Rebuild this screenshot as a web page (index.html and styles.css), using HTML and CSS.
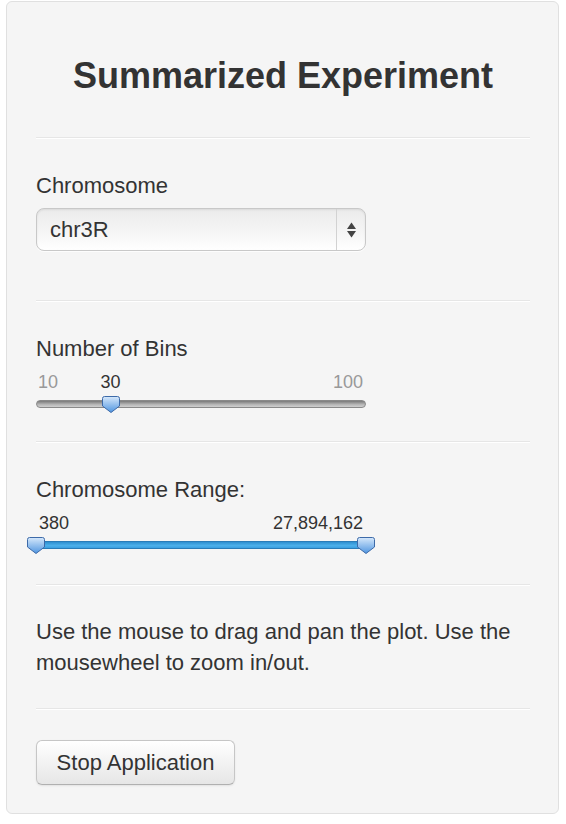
FILE: index.html
```html
<!DOCTYPE html>
<html>
<head>
<meta charset="utf-8">
<link rel="stylesheet" href="styles.css">
</head>
<body>
<div class="panel">
  <h1 class="title">Summarized Experiment</h1>
  <hr class="sep">
  <div class="field">
    <label class="label">Chromosome</label>
    <div class="select">
      <span class="select-value">chr3R</span>
      <span class="select-arrows">
        <svg width="11" height="18" viewBox="0 0 11 18"><path d="M5.5 1.5 L10 8 H1 Z" fill="#444"/><path d="M5.5 16.5 L10 10 H1 Z" fill="#444"/></svg>
      </span>
    </div>
  </div>
  <hr class="sep sep-select">
  <div class="field">
    <label class="label">Number of Bins</label>
    <div class="slider slider-bins">
      <span class="s-lbl s-min">10</span>
      <span class="s-lbl s-val" style="left:22.6%">30</span>
      <span class="s-lbl s-max">100</span>
      <div class="track track-gray"></div>
      <svg class="handle" style="left:22.6%" width="20" height="19" viewBox="0 0 20 19"><defs><linearGradient id="hg1" x1="0" y1="0" x2="0" y2="1"><stop offset="0" stop-color="#d6e8fb"/><stop offset="1" stop-color="#4f95e0"/></linearGradient></defs><path d="M1.5 3.5 Q1.5 1.5 3.5 1.5 H16.5 Q18.5 1.5 18.5 3.5 V11 L10 17.5 L1.5 11 Z" fill="url(#hg1)" stroke="#3d6aa8" stroke-width="1"/></svg>
    </div>
  </div>
  <hr class="sep sep-slider">
  <div class="field">
    <label class="label">Chromosome Range:</label>
    <div class="slider slider-range">
      <span class="s-lbl s-from">380</span>
      <span class="s-lbl s-to">27,894,162</span>
      <div class="track track-blue"></div>
      <svg class="handle" style="left:0%" width="20" height="19" viewBox="0 0 20 19"><defs><linearGradient id="hg2" x1="0" y1="0" x2="0" y2="1"><stop offset="0" stop-color="#d6e8fb"/><stop offset="1" stop-color="#4f95e0"/></linearGradient></defs><path d="M1.5 3.5 Q1.5 1.5 3.5 1.5 H16.5 Q18.5 1.5 18.5 3.5 V11 L10 17.5 L1.5 11 Z" fill="url(#hg2)" stroke="#3d6aa8" stroke-width="1"/></svg>
      <svg class="handle" style="left:100%" width="20" height="19" viewBox="0 0 20 19"><path d="M1.5 3.5 Q1.5 1.5 3.5 1.5 H16.5 Q18.5 1.5 18.5 3.5 V11 L10 17.5 L1.5 11 Z" fill="url(#hg2)" stroke="#3d6aa8" stroke-width="1"/></svg>
    </div>
  </div>
  <hr class="sep sep-slider">
  <p class="help">Use the mouse to drag and pan the plot. Use the mousewheel to zoom in/out.</p>
  <hr class="sep">
  <button class="btn">Stop Application</button>
</div>
</body>
</html>
```
FILE: styles.css
```css
html, body {
  margin: 0;
  padding: 0;
  background: #ffffff;
}
.panel {
  margin: 1px 0 0 6px;
  width: 553px;
  box-sizing: border-box;
  border: 1px solid #e0e0e0;
  border-radius: 6px;
  background: #f5f5f5;
  padding: 54px 28px 28px 29px;
  font-family: "Liberation Sans", Arial, sans-serif;
  color: #333;
}
.title {
  margin: 0;
  font-size: 36px;
  line-height: 40px;
  font-weight: bold;
  text-align: center;
  color: #333;
}
.sep {
  margin: 0;
  border: 0;
  border-top: 1px solid #e6e6e6;
  border-bottom: 1px solid #ffffff;
  height: 0;
}
.title + .sep { margin-top: 41px; }
.field { padding-top: 31px; }
.label {
  display: block;
  font-size: 22px;
  line-height: 31px;
  color: #333;
}
.select {
  margin-top: 7px;
  width: 330px;
  height: 43px;
  box-sizing: border-box;
  border: 1px solid #c8c8c8;
  border-radius: 8px;
  background: linear-gradient(#ebebeb, #f6f6f6 60%, #ffffff);
  box-shadow: inset 0 1px 2px rgba(0,0,0,0.08), 0 1px 0 rgba(255,255,255,0.8);
  display: flex;
  align-items: center;
}
.select-value {
  flex: 1;
  padding-left: 13px;
  font-size: 22px;
  color: #333;
  height: 100%;
  display: flex;
  align-items: center;
  border-right: 1px solid #d2d2d2;
}
.select-arrows {
  width: 28px;
  display: flex;
  justify-content: center;
  align-items: center;
}
.sep-select { margin-top: 49px; }
.slider {
  position: relative;
  width: 330px;
  margin-top: 8px;
}
.slider-bins { height: 39px; }
.slider-range { height: 41px; }
.s-lbl {
  position: absolute;
  top: 0;
  font-size: 18px;
  line-height: 20px;
  white-space: nowrap;
}
.s-min { left: 2px; color: #999; }
.s-max { right: 3px; color: #999; }
.s-val { transform: translateX(-50%); color: #333; }
.s-from { left: 3px; color: #333; }
.s-to { right: 3px; color: #333; }
.track {
  position: absolute;
  left: 0;
  right: 0;
  top: 28px;
  height: 8px;
  border-radius: 4px;
  box-sizing: border-box;
}
.track-gray {
  background: linear-gradient(#7a7a7a, #b8b8b8 60%, #cfcfcf);
  border: 1px solid #8a8a8a;
}
.track-blue {
  background: linear-gradient(#2f8fd0, #4db0ea 60%, #3a9ee0);
  border: 1px solid #2a7cb8;
  border-radius: 0;
}
.handle {
  position: absolute;
  top: 23px;
  margin-left: -10px;
  display: block;
}
.sep-slider { margin-top: 30px; }
.help {
  margin: 30px 0 30px 0;
  font-size: 22px;
  line-height: 31px;
  color: #333;
}
.btn {
  margin-top: 30px;
  display: block;
  width: 199px;
  height: 45px;
  padding: 0;
  font-family: "Liberation Sans", Arial, sans-serif;
  font-size: 22px;
  color: #333;
  border: 1px solid #c6c6c6;
  border-bottom-color: #b0b0b0;
  border-radius: 6px;
  background: linear-gradient(#ffffff, #e6e6e6);
  box-shadow: inset 0 1px 0 rgba(255,255,255,0.3), 0 1px 2px rgba(0,0,0,0.08);
}
```
